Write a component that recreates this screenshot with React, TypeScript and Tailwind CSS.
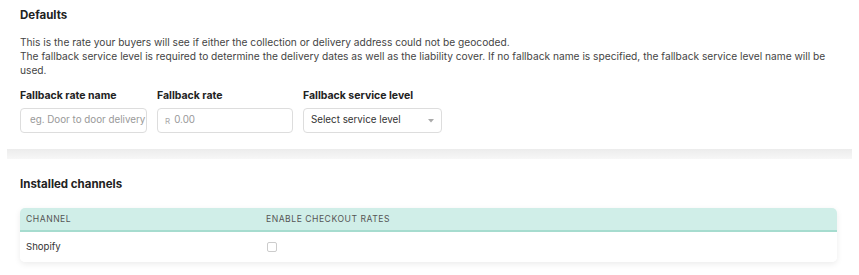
export default function App() {
  return (
    <div className="w-[859px] h-[275px] bg-white overflow-hidden font-['Inter',sans-serif] text-[#333]">
      <div className="px-[7px]">
        {/* Defaults card */}
        <div className="bg-white px-[13px] pt-[8px] pb-[16px]">
          <h2 className="text-[11.5px] font-bold text-[#222] leading-[14px]">Defaults</h2>
          <p className="mt-[13px] w-[810px] text-[10.2px] leading-[14px] text-[#444]">
            This is the rate your buyers will see if either the collection or delivery address could not be geocoded.
            <br />
            The fallback service level is required to determine the delivery dates as well as the liability cover. If no
            fallback name is specified, the fallback service level name will be used.
          </p>
          <div className="mt-[12px] flex gap-[10px]">
            <Field label="Fallback rate name" width="w-[127px]">
              <div className="h-[25px] border border-[#ddd] rounded-[4px] flex items-center pl-[9px] text-[9.8px] text-[#999] overflow-hidden whitespace-nowrap">
                eg. Door to door delivery
              </div>
            </Field>
            <Field label="Fallback rate" width="w-[136px]">
              <div className="h-[25px] border border-[#ddd] rounded-[4px] flex items-center gap-[4px] px-[7px] text-[9.8px] text-[#999]">
                <span className="text-[8px] text-[#aaa]">R</span>
                <span>0.00</span>
              </div>
            </Field>
            <Field label="Fallback service level" width="w-[139px]">
              <div className="h-[25px] border border-[#ddd] rounded-[4px] flex items-center justify-between pl-[7px] pr-[7px] text-[9.8px] text-[#333]">
                <span>Select service level</span>
                <svg width="6" height="4" viewBox="0 0 6 4">
                  <path d="M0 0 L6 0 L3 3.5 Z" fill="#aaa" />
                </svg>
              </div>
            </Field>
          </div>
        </div>

        {/* separator band */}
        <div className="h-[10px] bg-gradient-to-b from-[#ececec] to-[#f7f7f7]" />

        {/* Installed channels card */}
        <div className="bg-white px-[13px] pt-[18px] pb-[14px]">
          <h2 className="text-[11.5px] font-bold text-[#222] leading-[14px]">Installed channels</h2>
          <div className="mt-[17px] w-[817px] rounded-[5px] shadow-[0_2px_6px_rgba(0,0,0,0.08)] overflow-hidden">
            <div className="h-[24px] bg-[#d0eee8] border-b-2 border-[#a6dccf] flex items-center text-[8.6px] tracking-[0.06em] text-[#555]">
              <div className="w-[246px] pl-[6px]">CHANNEL</div>
              <div>ENABLE CHECKOUT RATES</div>
            </div>
            <div className="h-[30px] bg-white flex items-center text-[9.6px] text-[#333]">
              <div className="w-[246px] pl-[6px]">Shopify</div>
              <div className="w-[10px] h-[10px] border border-[#ccc] rounded-[2px] ml-[1px]" />
            </div>
          </div>
        </div>
      </div>
    </div>
  );
}

function Field({ label, width, children }: { label: string; width: string; children: React.ReactNode }) {
  return (
    <div className={width}>
      <div className="text-[10.5px] font-bold text-[#222] leading-[14px] mb-[5px]">{label}</div>
      {children}
    </div>
  );
}
